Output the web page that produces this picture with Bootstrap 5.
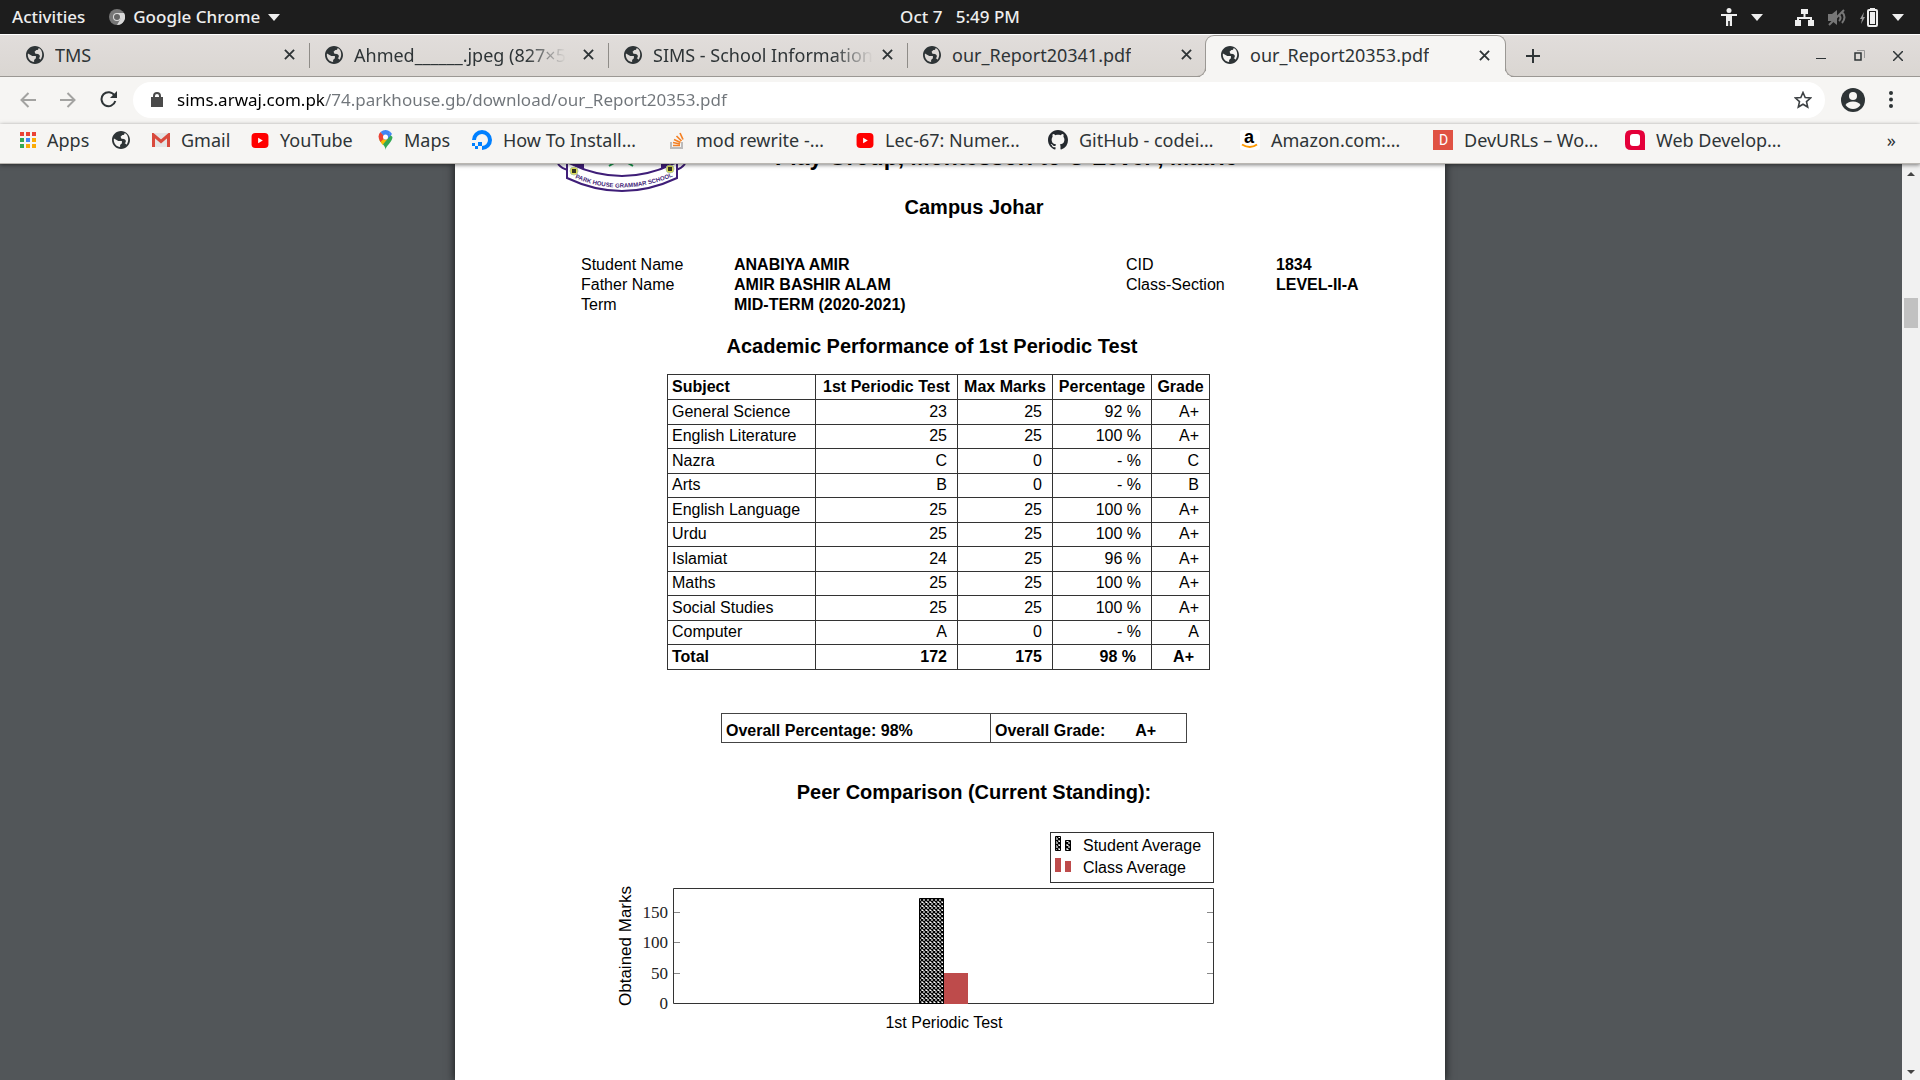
<!DOCTYPE html>
<html lang="en">
<head>
<meta charset="utf-8">
<meta name="viewport" content="width=device-width, initial-scale=1">
<title>our_Report20353.pdf</title>
<link rel="stylesheet" href="https://cdn.jsdelivr.net/npm/bootstrap@5.3.0/dist/css/bootstrap.min.css">
<style>
  body { font-family: "Noto Sans", sans-serif; font-size: 18px; line-height: 24px; color: #2e3436; background: #525659; }
  button { font: inherit; color: inherit; border: 0; background: none; padding: 0; display: flex; align-items: center; }
  svg { display: block; flex: none; }
  a { color: inherit; text-decoration: none; }

  .desk-bar { height: 34px; background: #1d1d1d; color: #eee; font-size: 17px; font-weight: 500; padding: 0 12px; }
  .desk-bar > div { flex: 1 1 0; }
  .desk-bar time { padding-left: 4px; }
  .status-set { gap: 14px; }

  .tab-strip { height: 43px; padding-left: 11px; background: linear-gradient(#e1dddb, #dad6d2); border-top: 1px solid #fff; border-bottom: 1px solid #9b9894; }
  .tab-item { width: 299px; min-width: 0; padding: 0 15px 2px; position: relative; }
  .tab-item + .tab-item:not(.current)::before { content: ""; position: absolute; left: -1px; top: 8px; height: 25px; border-left: 1px solid #8f8c88; }
  .tab-item a { min-width: 0; gap: 11px; }
  .tab-label { overflow: hidden; white-space: nowrap; }
  .tab-label.faded { -webkit-mask-image: linear-gradient(90deg, #000 calc(100% - 40px), transparent); mask-image: linear-gradient(90deg, #000 calc(100% - 40px), transparent); }
  .current { background: #f6f5f3; border: 1px solid #9b9894; border-bottom: 0; border-radius: 9px 9px 0 0; height: 43px; width: 301px; margin-left: -2px; padding-bottom: 4px; z-index: 1; }
  .current::before, .current::after { content: ""; position: absolute; bottom: 1px; width: 9px; height: 9px; border-bottom: 1px solid #9b9894; }
  .current::before { right: 100%; border-right: 1px solid #9b9894; border-bottom-right-radius: 9px; box-shadow: 3px 3px 0 #f6f5f3; }
  .current::after { left: 100%; border-left: 1px solid #9b9894; border-bottom-left-radius: 9px; box-shadow: -3px 3px 0 #f6f5f3; }
  .win-set { margin-right: 17px; }

  .tool-row { background: #f6f5f3; height: 47px; padding: 0 23px 2px 20px; }
  .url-box { background: #fff; border-radius: 18px; height: 36px; padding: 0 13px 0 18px; gap: 14px; }
  .url-box input { border: 0; outline: 0; padding: 0; min-width: 0; font-size: 17px; background: linear-gradient(90deg, #000 148px, #70757a 148px); -webkit-background-clip: text; background-clip: text; color: transparent; }
  .mark-row { background: #f6f5f3; height: 40px; padding: 0 24px 7px 20px; border-bottom: 1px solid #b9b6b1; box-shadow: 0 1px 4px rgba(0,0,0,.5); z-index: 2; position: relative; }
  .mark-grid { display: grid; grid-template-columns: 92px 40px 99px 127px 94px 194px 190px 192px 192px 193px 192px 170px; align-items: center; }
  .mark-grid a { display: flex; align-items: center; gap: 11px; white-space: nowrap; }

  .viewer { background: #525659; }
  .viewer main { padding-right: 2px; }
  .sheet { width: 990px; background: #fff; color: #000; box-shadow: 0 0 8px 1px rgba(0,0,0,.65); font-family: "Liberation Sans", Arial, sans-serif; font-size: 16px; line-height: 20px; padding: 0 78px 0 126px; }
  .crest-row { height: 31px; }
  .crest-row svg { margin-left: -41px; }
  .crest-row strong { font-size: 23px; line-height: 26px; margin: -20px 0 0 65px; white-space: nowrap; }
  .sheet h1, .sheet h2 { font-size: 20px; line-height: 24px; font-weight: 700; text-align: center; margin: 0; }
  .sheet .table-title { padding-right: 84px; }
  .facts { display: grid; grid-template-columns: 153px 392px 150px auto; margin: 36px 0 19px; }
  .facts dt { font-weight: 400; } .facts dd { font-weight: 700; margin: 0; white-space: nowrap; }
  .marks-table { width: 542px; height: 296px; margin: 16px 0 43px 86px; border-collapse: collapse; table-layout: fixed; }
  .marks-table thead tr, .marks-table tfoot tr { height: 25px; }
  .marks-table th, .marks-table td { border: 1px solid #333; padding: 0 10px; text-align: right; white-space: nowrap; }
  .marks-table th { padding: 0; text-align: center; }
  .marks-table th:first-child, .marks-table td:first-child { text-align: left; padding-left: 4px; }
  .marks-table tfoot td { font-weight: 700; } .marks-table tfoot .shifted { padding-right: 15px; }
  .overall { width: 466px; height: 30px; border: 1px solid #444; margin: 0 0 37px 140px; font-weight: 700; }
  .overall > div { padding: 7px 4px 0; }
  .overall > div:first-child { width: 269px; border-right: 1px solid #444; }
  .overall > div:last-child { gap: 30px; }
  .legend-box { width: 164px; height: 51px; border: 1px solid #333; margin: 28px 153px 1px auto; padding: 2px 4px; line-height: 22px; }
  .legend-box li { gap: 11px; }
  .plot { margin-left: 33px; }
  .scroll-track { width: 18px; background: #f1f1f1; padding: 8px 2px 6px; z-index: 1; }
  .scroll-thumb { height: 30px; background: #c1c1c1; margin-top: 122px; }
</style>
<script src="https://cdn.jsdelivr.net/npm/bootstrap@5.3.0/dist/js/bootstrap.bundle.min.js"></script>
</head>
<body class="vh-100 d-flex flex-column overflow-hidden">
<svg width="0" height="0" class="position-absolute" aria-hidden="true">
  <symbol id="globe" viewBox="2 2 20 20"><path fill="#2e3436" d="M12 2C6.480 2 2 6.480 2 12s4.480 10 10 10 10-4.480 10-10S17.520 2 12 2zm-1 17.900c-3.900-.5-7-3.800-7-7.900 0-.6.100-1.200.2-1.800L9 13h4v2.500l-2 2v2.400zm7-2.500c-.3-.8-1-1.400-1.900-1.400 1.900-1.500 1.900-4-.6-5l-3-.5-1-2 2-2c2 0 2.500-1.500 2.500-2.400 2.900 1.200 4 4 4 7.400 0 2-.7 4.500-2 5.900z"/></symbol>
  <symbol id="cross" viewBox="0 0 12 12"><path stroke="#2e3436" stroke-width="2" d="M1 1l10 10M11 1L1 11"/></symbol>
  <symbol id="caret" viewBox="0 0 12 7"><path fill="#eee" d="M0 0h12L6 7z"/></symbol>
  <symbol id="tube" viewBox="0 0 18 16"><rect width="18" height="16" rx="4" fill="#f00"/><path fill="#fff" d="M7 5v6l5-3z"/></symbol>
</svg>

<header class="desk-bar d-flex align-items-center">
  <div class="d-flex align-items-center">
    <button type="button">Activities</button>
    <button type="button" class="ms-3 ps-2 gap-2">
      <svg width="16" height="16" viewBox="0 0 16 16"><circle cx="8" cy="8" r="8" fill="#777"/><path fill="#d8d8d8" d="M8 4h7a8 8 0 0 1-7 12l4-7z"/><circle cx="8" cy="8" r="4" fill="#ddd"/><circle cx="8" cy="8" r="3" fill="#666"/></svg>
      <span>Google Chrome</span><svg width="12" height="7"><use href="#caret"/></svg>
    </button>
  </div>
  <time class="text-center">Oct 7 &nbsp; 5:49 PM</time>
  <div class="d-flex align-items-center justify-content-end pe-1">
    <button type="button" aria-label="Accessibility" class="status-set">
      <svg width="16" height="18" viewBox="0 0 16 18" fill="#eee"><circle cx="8" cy="2.500" r="2.500"/><path d="M0 6h16v2h-5v10H8.800v-5H7.200v5H5V8H0z"/></svg>
      <svg width="12" height="7"><use href="#caret"/></svg>
    </button>
    <button type="button" aria-label="System menu" class="ms-4 ps-2 status-set">
      <svg width="19" height="17" viewBox="0 0 19 17"><path fill="#eee" d="M6 0h7v5H6zM0 11h6v6H0zM13 11h6v6h-6z"/><path d="M9.500 5v4M3 12V9h13v3" fill="none" stroke="#eee" stroke-width="2"/></svg>
      <svg width="18" height="17" viewBox="0 0 18 17"><path fill="#777" d="M0 5h4l5-4v15l-5-4H0z"/><path d="M11 6q3 3 0 6M14 3q5 5 0 11M1 16L16 1" fill="none" stroke="#777" stroke-width="2"/></svg>
      <svg width="18" height="19" viewBox="0 0 18 19"><path fill="#999" d="M4 4L0 11h2l-1 5 4-7H3z"/><rect x="8" y="2" width="9" height="16" rx="1" fill="none" stroke="#eee" stroke-width="2"/><path fill="#eee" d="M10 0h5v2h-5zM10 4h5v12h-5z"/></svg>
      <svg width="12" height="7"><use href="#caret"/></svg>
    </button>
  </div>
</header>

<nav class="tab-strip d-flex" aria-label="Tabs">
  <div class="tab-item d-flex align-items-center justify-content-between"><a href="#" class="d-flex align-items-center"><svg width="18" height="18"><use href="#globe"/></svg><span class="tab-label">TMS</span></a><button type="button" aria-label="Close tab"><svg width="11" height="11"><use href="#cross"/></svg></button></div>
  <div class="tab-item d-flex align-items-center justify-content-between gap-2"><a href="#" class="d-flex align-items-center"><svg width="18" height="18"><use href="#globe"/></svg><span class="tab-label faded">Ahmed______.jpeg (827×5</span></a><button type="button" aria-label="Close tab"><svg width="11" height="11"><use href="#cross"/></svg></button></div>
  <div class="tab-item d-flex align-items-center justify-content-between gap-2"><a href="#" class="d-flex align-items-center"><svg width="18" height="18"><use href="#globe"/></svg><span class="tab-label faded">SIMS - School Information</span></a><button type="button" aria-label="Close tab"><svg width="11" height="11"><use href="#cross"/></svg></button></div>
  <div class="tab-item d-flex align-items-center justify-content-between"><a href="#" class="d-flex align-items-center"><svg width="18" height="18"><use href="#globe"/></svg><span class="tab-label">our_Report20341.pdf</span></a><button type="button" aria-label="Close tab"><svg width="11" height="11"><use href="#cross"/></svg></button></div>
  <div class="tab-item current d-flex align-items-center justify-content-between"><a href="#" class="d-flex align-items-center"><svg width="18" height="18"><use href="#globe"/></svg><span class="tab-label">our_Report20353.pdf</span></a><button type="button" aria-label="Close tab"><svg width="11" height="11"><use href="#cross"/></svg></button></div>
  <button type="button" aria-label="New tab" class="ms-3 ps-1"><svg width="14" height="14" viewBox="0 0 14 14"><path stroke="#2e3436" stroke-width="2" d="M7 0v14M0 7h14"/></svg></button>
  <div class="ms-auto d-flex win-set">
    <button type="button" aria-label="Minimise"><svg width="10" height="10" viewBox="0 0 10 10"><path fill="#2e3436" d="M0 7h10v1H0z"/></svg></button>
    <button type="button" aria-label="Restore" class="mx-4 px-1"><svg width="11" height="11" viewBox="0 0 11 11" fill="none"><path stroke="#999" d="M3 .5h7.500V8"/><path stroke="#2e3436" stroke-width="1.500" d="M1 3h6v7H1z"/></svg></button>
    <button type="button" aria-label="Close"><svg width="10" height="10" viewBox="0 0 10 10"><path stroke="#2e3436" stroke-width="1.500" d="M0 0l10 10M10 0L0 10"/></svg></button>
  </div>
</nav>

<form class="tool-row d-flex align-items-center">
  <button type="button" aria-label="Back"><svg width="16" height="16" viewBox="0 0 16 16"><path fill="none" stroke="#a3a3a1" stroke-width="2" d="M16 8H2M8.500 1L1.500 8l7 7"/></svg></button>
  <button type="button" aria-label="Forward" class="mx-4"><svg width="16" height="16" viewBox="0 0 16 16"><path fill="none" stroke="#a3a3a1" stroke-width="2" d="M0 8h14M7.500 1l7 7-7 7"/></svg></button>
  <button type="button" aria-label="Reload"><svg width="17" height="17" viewBox="0 0 17 17"><path fill="none" stroke="#2e3436" stroke-width="2" d="M14.500 4.500A7 7 0 1 0 15.300 10"/><path fill="#2e3436" d="M17 0v7h-7z"/></svg></button>
  <div class="url-box flex-fill d-flex align-items-center ms-3">
    <svg width="12" height="15" viewBox="0 0 12 15"><path fill="#4a4a4a" d="M0 5h12v10H0z"/><path fill="none" stroke="#4a4a4a" stroke-width="2" d="M3 6V4a3 3 0 0 1 6 0v2"/></svg>
    <input type="text" class="flex-fill" aria-label="Address" value="sims.arwaj.com.pk/74.parkhouse.gb/download/our_Report20353.pdf">
    <button type="button" aria-label="Bookmark this page"><svg width="18" height="18" viewBox="0 0 18 18"><path fill="none" stroke="#3c4043" stroke-width="1.600" d="M9 1.500l2.200 5 5.400.5-4.100 3.600 1.200 5.400L9 13.200 4.300 16l1.200-5.400L1.400 7l5.400-.5z"/></svg></button>
  </div>
  <button type="button" aria-label="Profile" class="ms-3"><svg width="24" height="24" viewBox="0 0 24 24"><circle cx="12" cy="12" r="12" fill="#2e3436"/><circle cx="12" cy="8" r="4" fill="#f6f5f3"/><path fill="#f6f5f3" d="M4.500 17q2-3.500 7.500-3.500t7.500 3.500q-3 4-7.500 4t-7.500-4z"/></svg></button>
  <button type="button" aria-label="Menu" class="ms-4 me-1"><svg width="4" height="17" viewBox="0 0 4 17" fill="#2e3436"><circle cx="2" cy="2" r="2"/><circle cx="2" cy="8.500" r="2"/><circle cx="2" cy="15" r="2"/></svg></button>
</form>

<nav class="mark-row d-flex align-items-center justify-content-between" aria-label="Bookmarks">
  <div class="mark-grid">
    <a href="#"><svg width="16" height="16" viewBox="0 0 16 16"><path fill="#ea4335" d="M0 0h4v4H0zM6 0h4v4H6zM12 0h4v4h-4z"/><path fill="#34a853" d="M0 6h4v4H0zM0 12h4v4H0z"/><path fill="#4285f4" d="M6 6h4v4H6z"/><path fill="#fbab05" d="M12 6h4v4h-4zM6 12h4v4H6zM12 12h4v4h-4z"/></svg>Apps</a>
    <a href="#" aria-label="Untitled bookmark"><svg width="18" height="18"><use href="#globe"/></svg></a>
    <a href="#"><svg width="18" height="14" viewBox="0 0 18 14"><path fill="#e4e4e4" d="M1 0h16v14H1z"/><path fill="none" stroke="#d94a3d" stroke-width="3" d="M1.500 14V2L9 8.500 16.500 2v12"/></svg>Gmail</a>
    <a href="#"><svg width="18" height="15"><use href="#tube"/></svg>YouTube</a>
    <a href="#"><svg width="15" height="20" viewBox="0 0 14 20"><path fill="#34a853" d="M7 20c0-4 7-8 7-13L7 0 1 10c1 3 6 5 6 10z"/><path fill="#fbbc04" d="M1 10l6-6 2 5-5 6z"/><path fill="#ea4335" d="M2 2L7 7l-5 5Q-2 6 2 2z"/><path fill="#4285f4" d="M2 2q5-4 10 0l-5 6z"/><path fill="#4285f4" d="M12 2l-7 8 4-1 4.500-5z"/><circle cx="7" cy="7" r="2.500" fill="#fff"/></svg>Maps</a>
    <a href="#"><svg width="20" height="20" viewBox="0 0 20 20"><path fill="none" stroke="#0080ff" stroke-width="4" d="M2 10a8 8 0 1 1 8 8"/><path fill="#0080ff" d="M6 12h4v4H6zM3 16h3v3H3zM0 13h3v3H0z"/></svg>How To Install…</a>
    <a href="#" class="ps-1"><svg width="15" height="18" viewBox="0 0 15 18" fill="none"><path stroke="#bcbbbb" stroke-width="2" d="M1 11v6h11v-6"/><path stroke="#f48024" stroke-width="1.700" d="M3 14.500h7M3 11.500l7 1.500M4 8.500l6.500 3M6.500 5l5 5M10 2l3 6.500"/></svg>mod rewrite -…</a>
    <a href="#"><svg width="18" height="15"><use href="#tube"/></svg>Lec-67: Numer…</a>
    <a href="#"><svg width="20" height="20" viewBox="0 0 16 16"><path fill="#24292e" d="M8 0C3.580 0 0 3.580 0 8c0 3.540 2.290 6.530 5.470 7.590.4.070.55-.17.550-.38 0-.19-.01-.82-.01-1.490-2.010.370-2.530-.49-2.690-.94-.09-.23-.48-.94-.82-1.130-.28-.15-.68-.52-.01-.53.630-.01 1.080.580 1.230.820.720 1.210 1.870.870 2.330.660.070-.52.280-.87.510-1.070-1.780-.2-3.640-.89-3.640-3.950 0-.87.310-1.590.820-2.150-.08-.2-.36-1.020.080-2.120 0 0 .67-.21 2.200.820.640-.18 1.320-.27 2-.27s1.360.090 2 .27c1.530-1.040 2.200-.82 2.200-.82.440 1.100.160 1.920.080 2.120.510.560.820 1.270.820 2.150 0 3.070-1.870 3.750-3.650 3.950.290.250.540.730.540 1.480 0 1.070-.01 1.930-.01 2.200 0 .210.150.460.550.380A8 8 0 0 0 16 8c0-4.420-3.580-8-8-8z"/></svg>GitHub - codei…</a>
    <a href="#"><svg width="20" height="20" viewBox="0 0 20 20"><rect width="20" height="20" rx="3" fill="#fff"/><text x="4" y="13" font-family="Liberation Sans" font-weight="700" font-size="18">a</text><path fill="none" stroke="#f90" stroke-width="2" d="M2 14.500q8 5 15 0"/></svg>Amazon.com:…</a>
    <a href="#"><svg width="20" height="20" viewBox="0 0 20 20"><path fill="#e05243" d="M0 0h20v20H0z"/><text x="6" y="15" font-family="Roboto" font-size="14" fill="#fff">D</text></svg>DevURLs – Wo…</a>
    <a href="#"><svg width="20" height="20" viewBox="0 0 20 20"><path fill="#e4003a" d="M6 0h8q6 0 6 6v14H6q-6 0-6-6V6q0-6 6-6z"/><rect x="5" y="4" width="10" height="12" rx="3" fill="#fff"/></svg>Web Develop…</a>
  </div>
  <button type="button" aria-label="More bookmarks">»</button>
</nav>

<div class="viewer flex-fill d-flex overflow-hidden">
  <main class="flex-fill d-flex justify-content-center">
    <article class="sheet">
      <div class="crest-row d-flex align-items-start">
        <svg width="170" height="30" viewBox="0 0 170 30">
          <path d="M18 0q4 5 10 6M145 0q-4 5-9 6" fill="none" stroke="#3f1e78" stroke-width="2"/>
          <path fill="#3f1e78" d="M28 0h16v6L28 0zM121 0h16v0l-16 6z"/>
          <path d="M69 2l5-3M88-1l5 3" stroke="#1a9c50" stroke-width="2"/>
          <path d="M27-2Q82 26 137-2V14Q82 40 27 14z" fill="#fff" stroke="#3f1e78" stroke-width="2"/>
          <g stroke="#b4c8a4" fill="#e0dc50"><circle cx="34" cy="7" r="4"/><circle cx="130" cy="5" r="4"/></g>
          <path fill="#332" d="M32 5h4v4h-4zM128 3h4v4h-4z"/>
          <path id="ribbon" fill="none" d="M35 14Q82 34 134 12"/>
          <text font-family="Liberation Sans" font-size="6" font-weight="700" fill="#3f1e78"><textPath href="#ribbon">PARK HOUSE GRAMMAR SCHOOL</textPath></text>
        </svg>
        <strong>Play Group, Montessori to O Level , Matric</strong>
      </div>
      <h1>Campus Johar</h1>
      <dl class="facts">
        <dt>Student Name</dt><dd>ANABIYA AMIR</dd><dt>CID</dt><dd>1834</dd>
        <dt>Father Name</dt><dd>AMIR BASHIR ALAM</dd><dt>Class-Section</dt><dd>LEVEL-II-A</dd>
        <dt>Term</dt><dd>MID-TERM (2020-2021)</dd>
      </dl>
      <h2 class="table-title">Academic Performance of 1st Periodic Test</h2>
      <table class="marks-table">
        <colgroup><col style="width:148px"><col style="width:142px"><col style="width:95px"><col style="width:99px"><col style="width:58px"></colgroup>
        <thead><tr><th scope="col">Subject</th><th scope="col">1st Periodic Test</th><th scope="col">Max Marks</th><th scope="col">Percentage</th><th scope="col">Grade</th></tr></thead>
        <tbody>
          <tr><td>General Science</td><td>23</td><td>25</td><td>92 %</td><td>A+</td></tr>
          <tr><td>English Literature</td><td>25</td><td>25</td><td>100 %</td><td>A+</td></tr>
          <tr><td>Nazra</td><td>C</td><td>0</td><td>- %</td><td>C</td></tr>
          <tr><td>Arts</td><td>B</td><td>0</td><td>- %</td><td>B</td></tr>
          <tr><td>English Language</td><td>25</td><td>25</td><td>100 %</td><td>A+</td></tr>
          <tr><td>Urdu</td><td>25</td><td>25</td><td>100 %</td><td>A+</td></tr>
          <tr><td>Islamiat</td><td>24</td><td>25</td><td>96 %</td><td>A+</td></tr>
          <tr><td>Maths</td><td>25</td><td>25</td><td>100 %</td><td>A+</td></tr>
          <tr><td>Social Studies</td><td>25</td><td>25</td><td>100 %</td><td>A+</td></tr>
          <tr><td>Computer</td><td>A</td><td>0</td><td>- %</td><td>A</td></tr>
        </tbody>
        <tfoot><tr><td>Total</td><td>172</td><td>175</td><td class="shifted">98 %</td><td class="shifted">A+</td></tr></tfoot>
      </table>
      <div class="overall d-flex">
        <div>Overall Percentage: 98%</div>
        <div class="d-flex"><span>Overall Grade:</span><span>A+</span></div>
      </div>
      <h2>Peer Comparison (Current Standing):</h2>
      <ul class="legend-box list-unstyled">
        <li class="d-flex"><svg width="17" height="18" viewBox="0 0 17 18"><path fill="url(#weave)" stroke="#000" d="M.5 1.500h5v14h-5zM10.500 5.500h5v10h-5z"/></svg>Student Average</li>
        <li class="d-flex"><svg width="17" height="18" viewBox="0 0 17 18"><path fill="#be4b4b" d="M0 1h6v14H0zM10 4h6v11h-6z"/></svg>Class Average</li>
      </ul>
      <svg class="plot" width="600" height="150" viewBox="0 0 600 150" font-family="Liberation Sans" font-size="16">
        <defs><pattern id="weave" width="4" height="4" patternUnits="userSpaceOnUse"><path fill="#fff" d="M0 0h4v4H0z"/><path stroke="#000" stroke-width="1.300" d="M0 0l4 4M4 0L0 4"/></pattern></defs>
        <path fill="none" stroke="#333" d="M59.500 4.500h540v115h-540z"/>
        <path stroke="#888" d="M60 28.500h6M60 58.500h6M60 89.500h6M593 28.500h6M593 58.500h6M593 89.500h6"/>
        <path fill="url(#weave)" stroke="#000" d="M305.500 14.500h24v105h-24z"/>
        <path fill="#be4b4b" d="M330 89h24v31h-24z"/>
        <g font-family="Liberation Serif" font-size="17" text-anchor="end" fill="#222"><text x="54" y="34">150</text><text x="54" y="64">100</text><text x="54" y="95">50</text><text x="54" y="125">0</text></g>
        <text x="330" y="144" text-anchor="middle">1st Periodic Test</text>
        <text transform="translate(17 62) rotate(-90)" text-anchor="middle" font-size="17">Obtained Marks</text>
      </svg>
    </article>
  </main>
  <aside class="scroll-track d-flex flex-column" aria-hidden="true">
    <svg class="mx-auto" width="8" height="4" viewBox="0 0 8 4"><path fill="#444" d="M0 4h8L4 0z"/></svg>
    <div class="scroll-thumb"></div>
    <svg class="mx-auto mt-auto" width="8" height="4" viewBox="0 0 8 4"><path fill="#444" d="M0 0h8L4 4z"/></svg>
  </aside>
</div>
</body>
</html>
